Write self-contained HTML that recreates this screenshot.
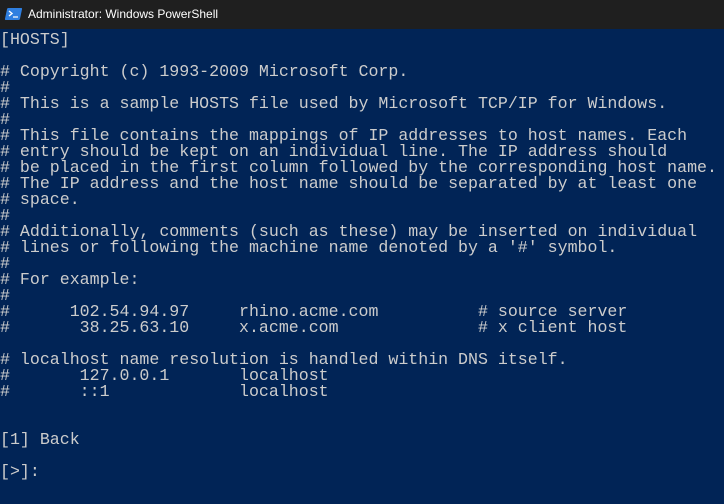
<!DOCTYPE html>
<html><head><meta charset="utf-8"><style>
html,body{margin:0;padding:0;width:724px;height:504px;overflow:hidden;background:#012456}
.tb{height:29px;background:#1f1f1f;color:#fff;font:12px "Liberation Sans",sans-serif;position:relative}
.tb span{position:absolute;left:28px;top:7px}
.ic{position:absolute;left:6px;top:8px;width:15px;height:12px;background:#2f7fe0;transform:skewX(-12deg);border-radius:1px}
pre{margin:0;padding:3px 0 0 0;color:#cccccc;font-family:"Liberation Mono",monospace;font-size:16.6px;line-height:16px;white-space:pre}
</style></head><body>
<div class="tb"><div class="ic"><svg width="15" height="12" style="transform:skewX(12deg)"><path d="M3 3l3 2.5-3 2.5" stroke="#fff" stroke-width="1.4" fill="none"/><path d="M7 9h5" stroke="#fff" stroke-width="1.2"/></svg></div><span>Administrator: Windows PowerShell</span></div>
<pre>[HOSTS]

# Copyright (c) 1993-2009 Microsoft Corp.
#
# This is a sample HOSTS file used by Microsoft TCP/IP for Windows.
#
# This file contains the mappings of IP addresses to host names. Each
# entry should be kept on an individual line. The IP address should
# be placed in the first column followed by the corresponding host name.
# The IP address and the host name should be separated by at least one
# space.
#
# Additionally, comments (such as these) may be inserted on individual
# lines or following the machine name denoted by a '#' symbol.
#
# For example:
#
#      102.54.94.97     rhino.acme.com          # source server
#       38.25.63.10     x.acme.com              # x client host

# localhost name resolution is handled within DNS itself.
#       127.0.0.1       localhost
#       ::1             localhost


[1] Back

[&gt;]:</pre>
</body></html>
